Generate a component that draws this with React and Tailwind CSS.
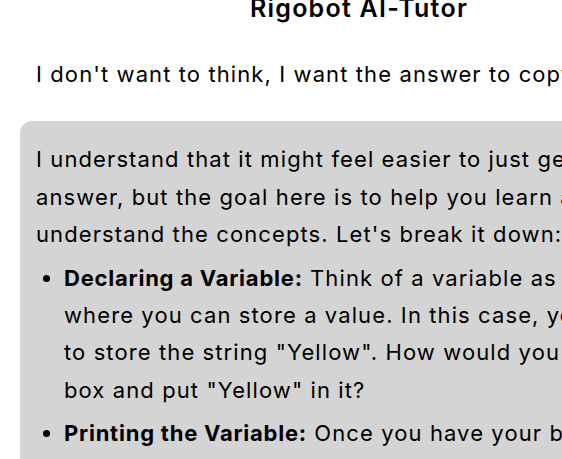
export default function App() {
  return (
    <div className="w-[562px] h-[459px] overflow-hidden bg-white text-black font-['Inter',sans-serif]">
      <div className="w-[718px] px-5 -mt-[8px]">
        {/* header */}
        <h1 className="text-[25px] font-semibold text-center leading-8 tracking-[0.05em]">Rigobot AI-Tutor</h1>

        {/* user message */}
        <div className="mt-[32px] px-4 text-[22px] leading-[1.7] tracking-[0.05em] whitespace-nowrap">
          I don't want to think, I want the answer to copy and paste it
        </div>

        {/* tutor reply */}
        <div className="mt-[28px] w-[661px] bg-[#d4d4d4] rounded-xl px-4 pt-5 pb-4 text-[22px] leading-[1.7] tracking-[0.05em]">
          <p className="mb-[6px]">
            I understand that it might feel easier to just get the answer, but the goal here is to help you learn and understand the concepts. Let's break it down:
          </p>
          <ul className="list-disc pl-7 space-y-[6px]">
            <li>
              <strong className="font-bold tracking-[0.035em]">Declaring a Variable:</strong> Think of a variable as a box where you can store a value. In this case, you want to store the string "Yellow". How would you create a box and put "Yellow" in it?
            </li>
            <li>
              <strong className="font-bold tracking-[0.035em]">Printing the Variable:</strong> Once you have your box with "Yellow" inside, how would you show what's in the box on the screen?
            </li>
          </ul>
        </div>
      </div>
    </div>
  )
}
